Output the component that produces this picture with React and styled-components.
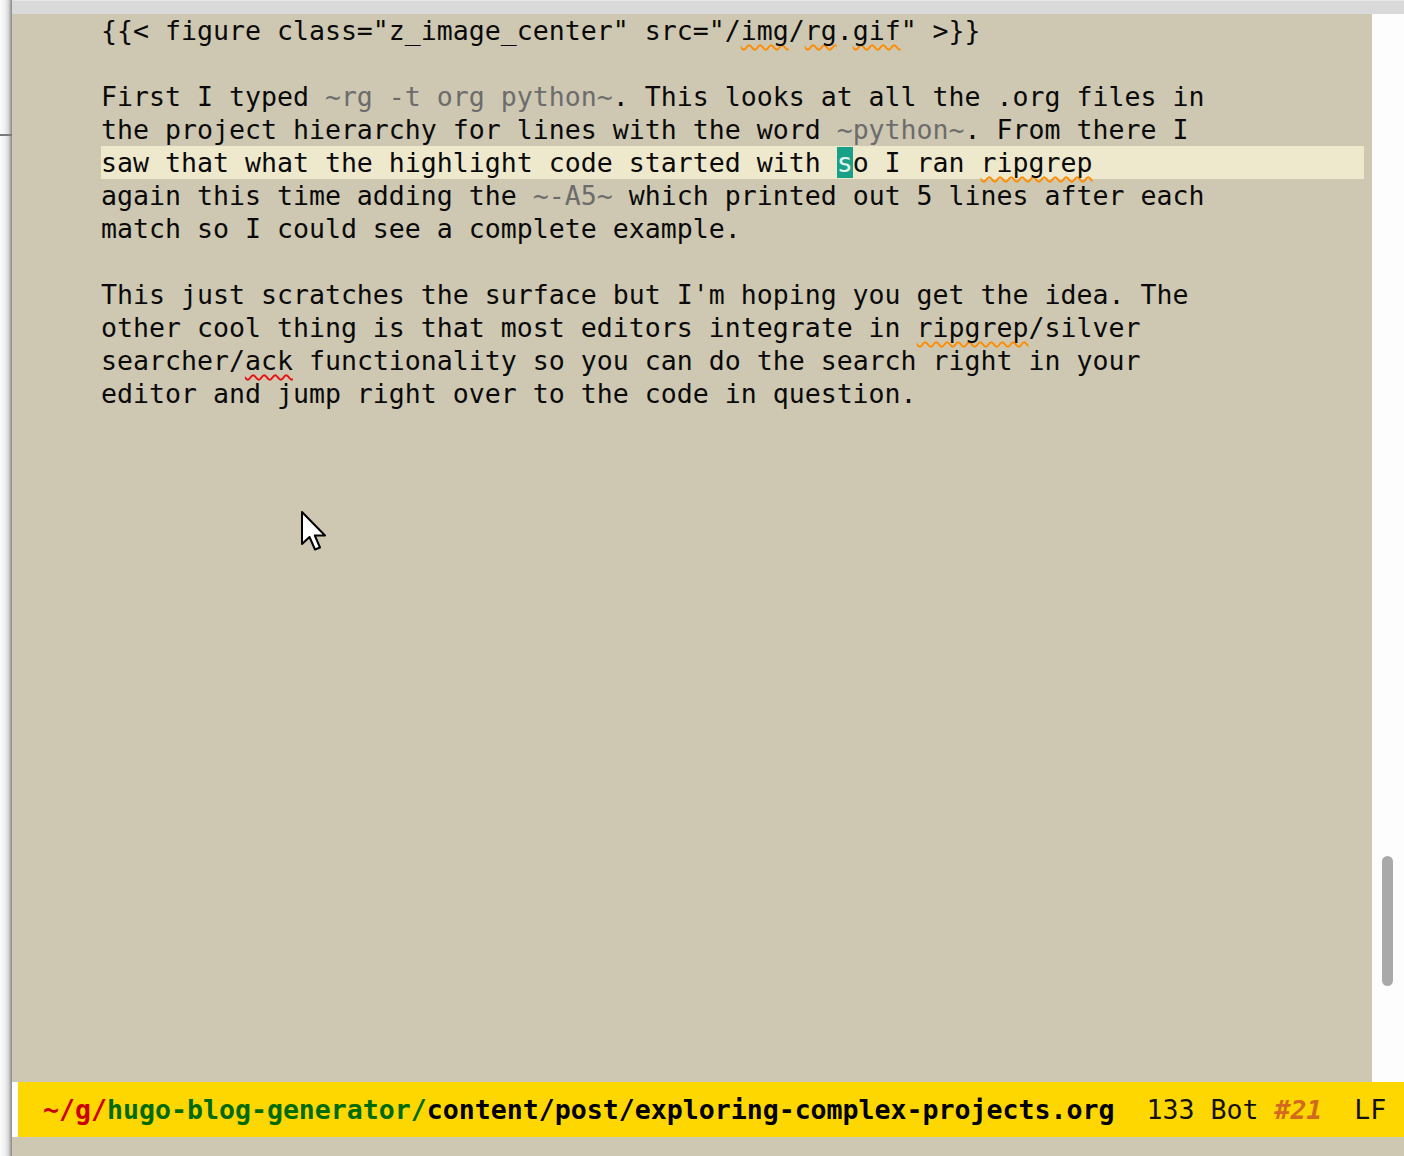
import styled, { createGlobalStyle } from 'styled-components';

const GlobalStyle = createGlobalStyle`
  html, body {
    margin: 0;
    padding: 0;
    background: #cec8b2;
  }
`;

const lines = [
  [{ t: '{{< figure class="z_image_center" src="/' }, { t: 'img', sq: 'warn' }, { t: '/' }, { t: 'rg', sq: 'warn' }, { t: '.' }, { t: 'gif', sq: 'warn' }, { t: '" >}}' }],
  [],
  [{ t: 'First I typed ' }, { t: '~rg -t org python~', code: true }, { t: '. This looks at all the .org files in' }],
  [{ t: 'the project hierarchy for lines with the word ' }, { t: '~python~', code: true }, { t: '. From there I' }],
  [{ t: 'saw that what the highlight code started with ' }, { t: 's', cursor: true }, { t: 'o I ran ' }, { t: 'ripgrep', sq: 'warn' }],
  [{ t: 'again this time adding the ' }, { t: '~-A5~', code: true }, { t: ' which printed out 5 lines after each' }],
  [{ t: 'match so I could see a complete example.' }],
  [],
  [{ t: "This just scratches the surface but I'm hoping you get the idea. The" }],
  [{ t: 'other cool thing is that most editors integrate in ' }, { t: 'ripgrep', sq: 'warn' }, { t: '/silver' }],
  [{ t: 'searcher/' }, { t: 'ack', sq: 'err' }, { t: ' functionality so you can do the search right in your' }],
  [{ t: 'editor and jump right over to the code in question.' }],
];

const Frame = styled.div`
  position: relative;
  width: 1404px;
  height: 1156px;
  display: grid;
  grid-template-columns: 12px 1fr;
  overflow: hidden;
  font-family: "DejaVu Sans Mono", "Liberation Mono", monospace;
  font-size: 26.57px;
  color: #0a0a0a;
`;

const LeftEdge = styled.div`
  background:
    linear-gradient(to bottom, transparent 134px, #7a7a7a 134px, #7a7a7a 136px, transparent 136px),
    linear-gradient(to right, #fbfbfb 0%, #f0f0f0 40%, #d8d8d8 70%, #a0a0a0 90%, #8a8a8a 100%);
`;

const Main = styled.div`
  display: flex;
  flex-direction: column;
  min-width: 0;
`;

const TopBar = styled.div`
  height: 14px;
  flex: none;
  background: #d9d9d9;
  border-top: 1px solid #e6e6e6;
  box-sizing: border-box;
`;

const Body = styled.div`
  flex: 1;
  display: flex;
  min-height: 0;
`;

const Editor = styled.div`
  flex: 1;
  background: #cec8b2;
  padding: 0 8px 0 89px;
`;

const Line = styled.div`
  height: 33px;
  line-height: 33px;
  white-space: pre;
  background: ${(p) => (p.$current ? '#eee8cc' : 'transparent')};
`;

const Code = styled.span`
  color: #6c6c6c;
`;

const Squiggle = styled.span`
  text-decoration-line: underline;
  text-decoration-style: wavy;
  text-decoration-color: ${(p) => (p.$kind === 'err' ? '#e81010' : '#ff8c00')};
  text-decoration-thickness: 1.5px;
  text-decoration-skip-ink: none;
  text-underline-offset: 4px;
`;

const Cursor = styled.span`
  background: #19a089;
  color: #e6f3ea;
`;

const Fringe = styled.div`
  width: 32px;
  flex: none;
  background: #fdfdfd;
  padding: 842px 0 0 10px;
  box-sizing: border-box;
`;

const Thumb = styled.div`
  width: 11px;
  height: 130px;
  border-radius: 6px;
  background: #a9a9a9;
`;

const ModeRow = styled.div`
  height: 55px;
  flex: none;
  display: flex;
  background: #fdfdfd;
  padding-left: 6px;
`;

const ModeLine = styled.div`
  flex: 1;
  background: #ffd700;
  padding-left: 25px;
  line-height: 55px;
  white-space: pre;
  color: #111;
`;

const Seg = styled.span`
  font-weight: ${(p) => (p.$bold ? 'bold' : 'normal')};
  font-style: ${(p) => (p.$italic ? 'italic' : 'normal')};
  color: ${(p) => p.$color || '#111'};
`;

const BottomPad = styled.div`
  height: 19px;
  flex: none;
  background: #cec8b2;
`;

const Pointer = styled.svg`
  position: absolute;
  left: 300px;
  top: 510px;
  pointer-events: none;
`;

function renderPart(p, i) {
  if (p.code) return <Code key={i}>{p.t}</Code>;
  if (p.sq) return <Squiggle key={i} $kind={p.sq}>{p.t}</Squiggle>;
  if (p.cursor) return <Cursor key={i}>{p.t}</Cursor>;
  return <span key={i}>{p.t}</span>;
}

export default function App() {
  return (
    <>
      <GlobalStyle />
      <Frame>
        <LeftEdge />
        <Main>
          <TopBar />
          <Body>
            <Editor>
              {lines.map((parts, i) => (
                <Line key={i} $current={i === 4}>
                  {parts.length ? parts.map(renderPart) : ' '}
                </Line>
              ))}
            </Editor>
            <Fringe>
              <Thumb />
            </Fringe>
          </Body>
          <ModeRow>
            <ModeLine>
              <Seg $bold $color="#cc0000">~/g/</Seg>
              <Seg $bold $color="#006b00">hugo-blog-generator/</Seg>
              <Seg $bold $color="#000">content/post/exploring-complex-projects.org</Seg>
              <Seg>  133 Bot </Seg>
              <Seg $bold $italic $color="#d2691e">#21</Seg>
              <Seg>  LF</Seg>
            </ModeLine>
          </ModeRow>
          <BottomPad />
        </Main>
        <Pointer width="28" height="44" viewBox="0 0 28 44">
          <path
            d="M2 2 L2 34 L9.5 27 L15 39.5 L20 37.5 L14.8 25.5 L25 25.5 Z"
            fill="#fff"
            stroke="#000"
            strokeWidth="2"
            strokeLinejoin="round"
          />
        </Pointer>
      </Frame>
    </>
  );
}
